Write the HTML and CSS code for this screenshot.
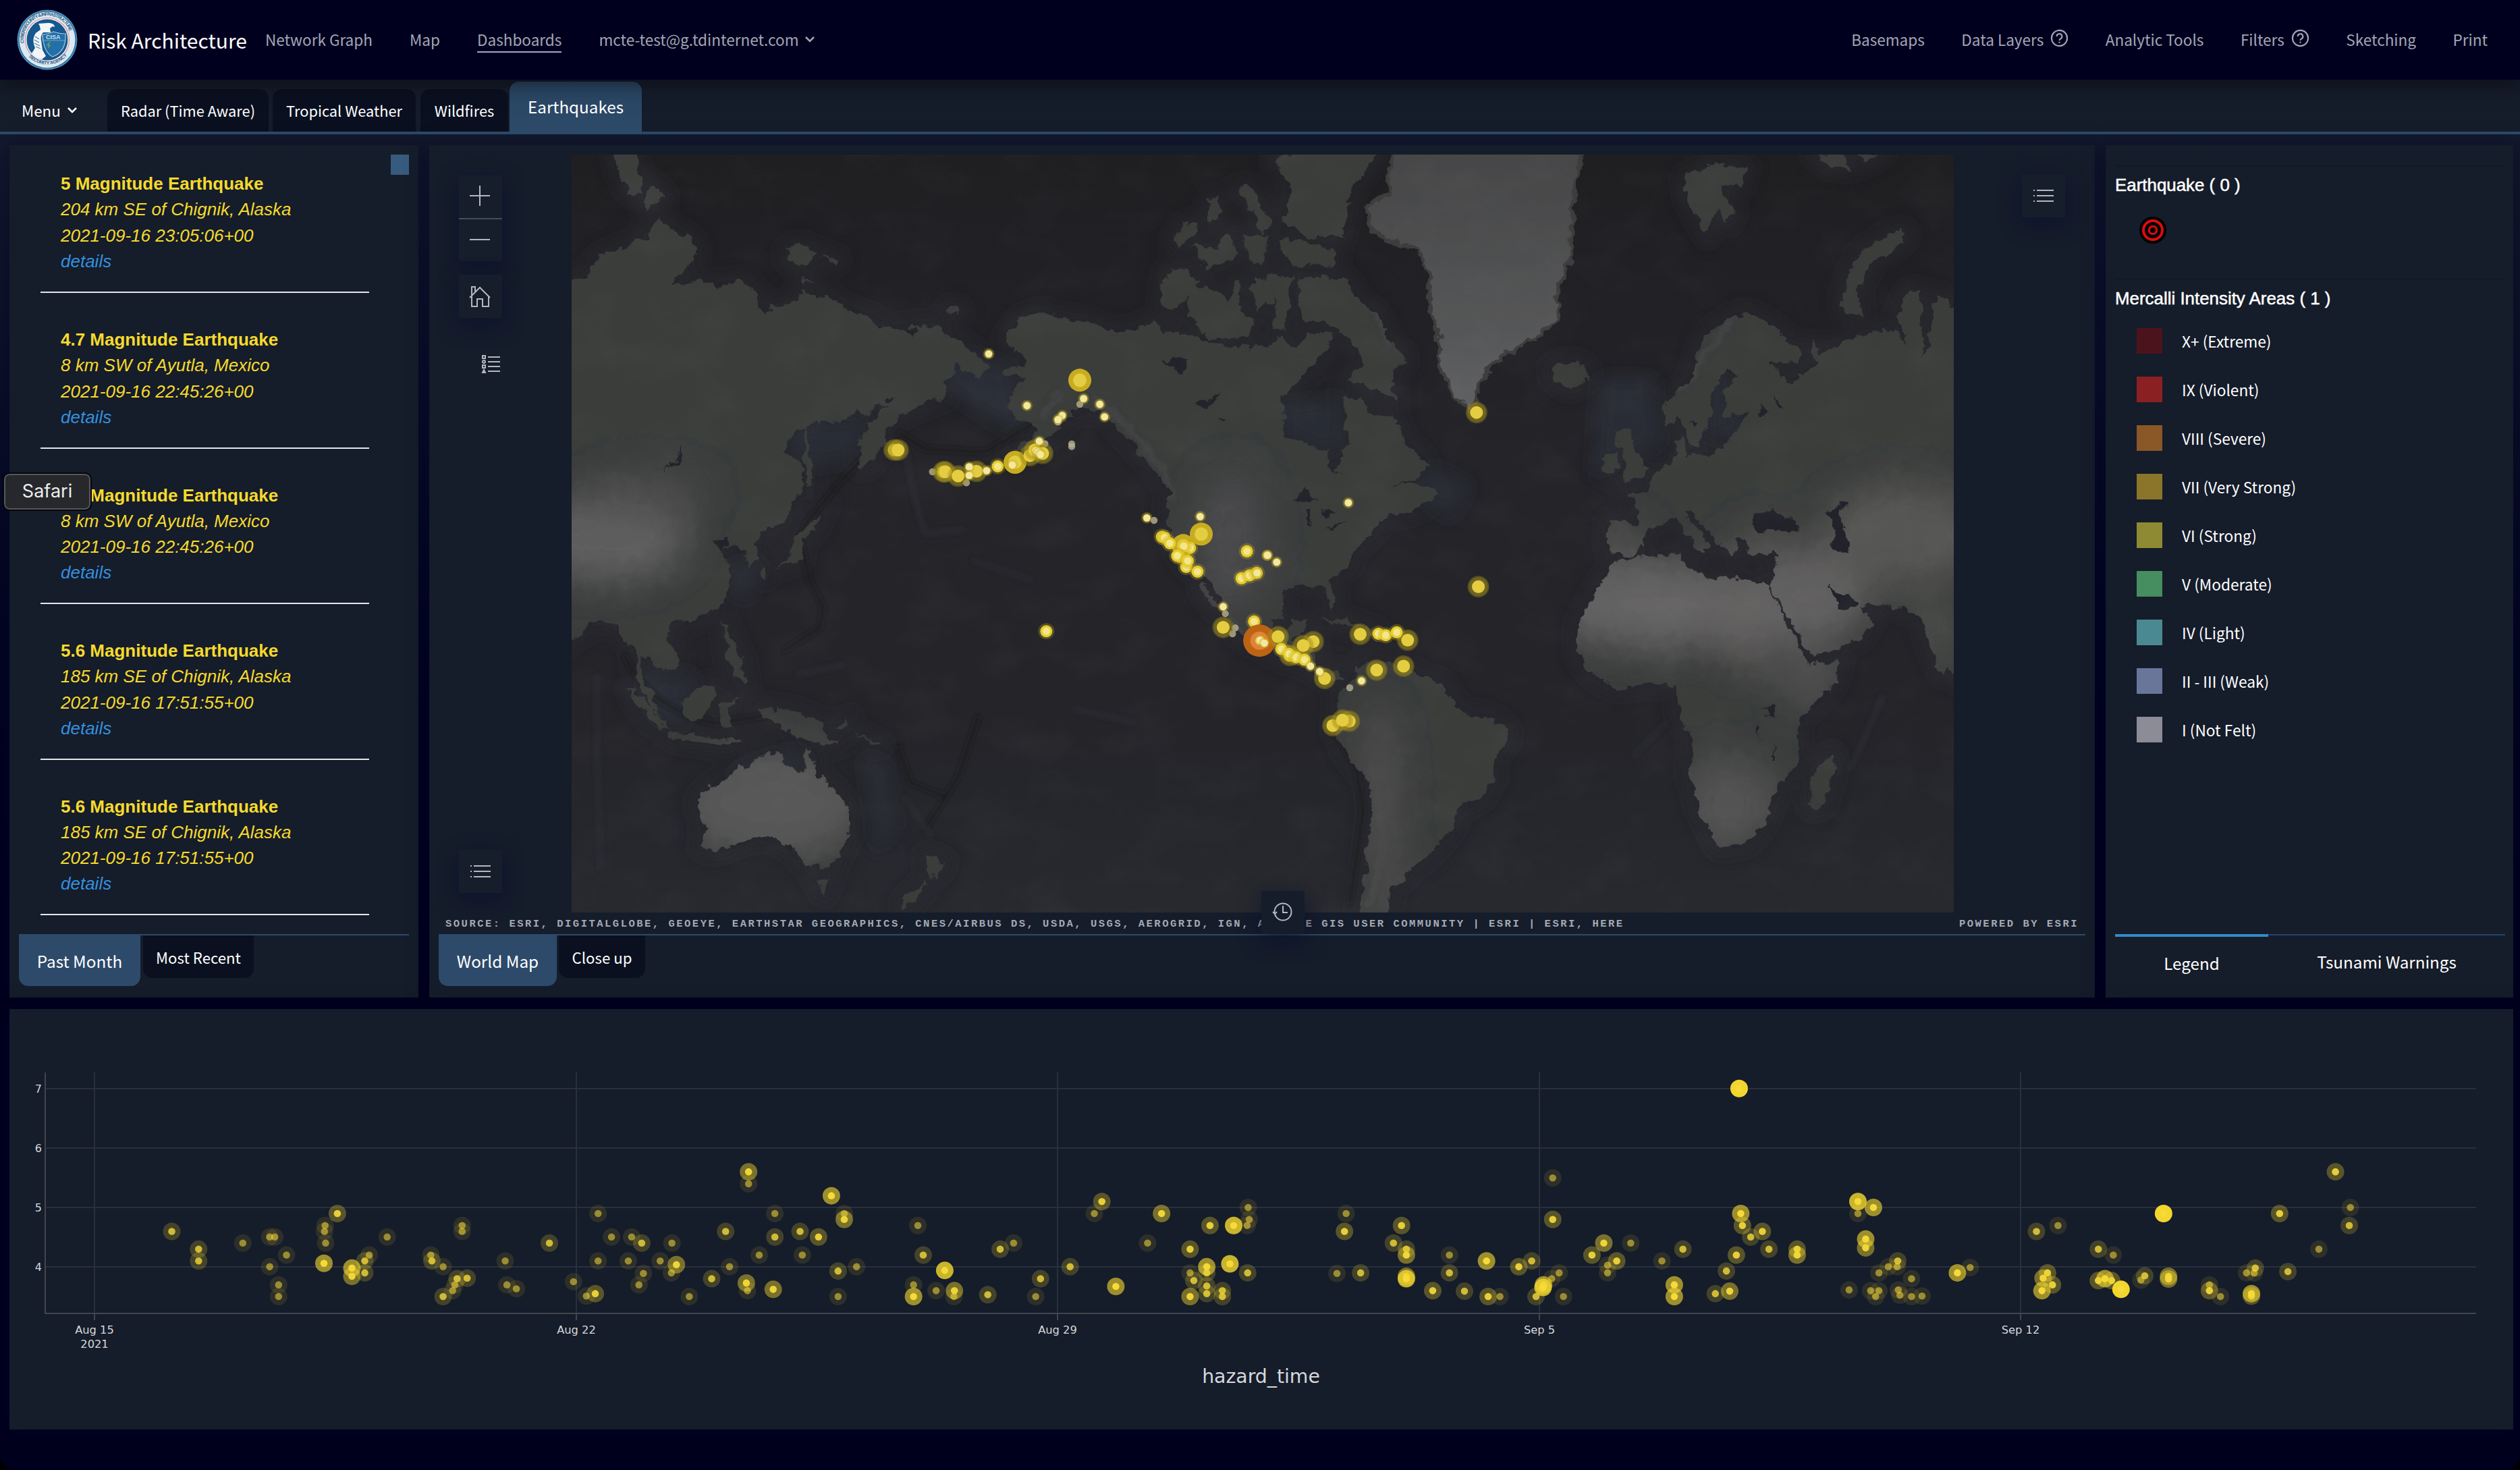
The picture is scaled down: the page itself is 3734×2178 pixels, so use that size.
FILE: index.html
```html
<!DOCTYPE html>
<html lang="en">
<head>
<meta charset="utf-8">
<title>Risk Architecture - Earthquakes</title>
<link rel="stylesheet" href="styles.css">
</head>
<body>
<div class="screen">
<header class="topbar">
  <svg class="logo" viewBox="0 0 90 90">
    <defs>
      <path id="ringTop" d="M10.5 50A35 35 0 1 1 79.5 50"/>
      <path id="ringBottom" d="M12 63A38.5 38.5 0 0 0 78 63"/>
    </defs>
    <circle cx="45" cy="45" r="44.5" fill="#4d8fb8"/>
    <circle cx="45" cy="45" r="42.5" fill="#1f5f8e"/>
    <circle cx="45" cy="45" r="41.5" fill="#dbe9f2"/>
    <circle cx="45" cy="45" r="32.5" fill="#f4f6f8" stroke="#d98a94" stroke-width="1.2"/>
    <circle cx="45" cy="45" r="30.5" fill="#15588f"/>
    <text class="logo-ring"><textPath href="#ringTop" textLength="104">CYBERSECURITY &amp; INFRASTRUCTURE</textPath></text>
    <text class="logo-ring"><textPath href="#ringBottom" startOffset="9" textLength="64">SECURITY AGENCY</textPath></text>
    <path d="M32 21l14-1c6 0 10 2 10 6l-3-1-4 3 1 6H39c-3 3-4 8-3 12l2 14 5 9-6 5c-6-1-12-5-15-9l5-8c-3-7-4-15 1-22l7-5-1-5z" fill="#f2f6f8"/>
    <path d="M27 40l6 4M26 45l7 4M26 50l8 4M28 55l7 3M38 38v10" stroke="#4f83a8" stroke-width="1.2" fill="none"/>
    <path d="M38 37q7 0 16-4 9 3 18 3c1 18-5 29-19 34-9-4-14-15-15-33z" fill="#2370a8" stroke="#a9c8dc" stroke-width="1.2"/>
    <path d="M39 46h32" stroke="#6fa2c4" stroke-width="1"/>
    <path d="M47 50v7M44 52l6 2M49 48l-3 5" stroke="#79a85e" stroke-width="1.3"/>
    <text x="43" y="43.5" class="logo-name">CISA</text>
  </svg>
  <span class="brand">Risk Architecture</span>
  <nav class="nav nav-left">
    <a>Network Graph</a><a>Map</a><a class="current">Dashboards</a>
    <a>mcte-test@g.tdinternet.com<svg class="chev" viewBox="0 0 16 10"><path d="M2 2l6 6 6-6"/></svg></a>
  </nav>
  <nav class="nav nav-right">
    <a>Basemaps</a>
    <a>Data Layers<svg class="help" viewBox="0 0 28 28"><circle cx="14" cy="14" r="12"/><path d="M10 11.5a4 4 0 1 1 5.6 3.6c-1.2.6-1.6 1.2-1.6 2.6M14 19.5v2"/></svg></a>
    <a>Analytic Tools</a>
    <a>Filters<svg class="help" viewBox="0 0 28 28"><circle cx="14" cy="14" r="12"/><path d="M10 11.5a4 4 0 1 1 5.6 3.6c-1.2.6-1.6 1.2-1.6 2.6M14 19.5v2"/></svg></a>
    <a>Sketching</a><a>Print</a>
  </nav>
</header>
<div class="tabbar">
  <div class="menu">Menu<svg class="chev" viewBox="0 0 16 10"><path d="M2 2l6 6 6-6"/></svg></div>
  <div class="tab t1">Radar (Time Aware)</div>
  <div class="tab t2">Tropical Weather</div>
  <div class="tab t3">Wildfires</div>
  <div class="tab active">Earthquakes</div>
</div>

<main class="board">
  <section class="panel feed">
    <div class="feed-scroll">
      <ul class="quakes">
        <li><b>5 Magnitude Earthquake</b><i>204 km SE of Chignik, Alaska</i><i>2021-09-16 23:05:06+00</i><a>details</a></li>
        <li><b>4.7 Magnitude Earthquake</b><i>8 km SW of Ayutla, Mexico</i><i>2021-09-16 22:45:26+00</i><a>details</a></li>
        <li><b>4.7 Magnitude Earthquake</b><i>8 km SW of Ayutla, Mexico</i><i>2021-09-16 22:45:26+00</i><a>details</a></li>
        <li><b>5.6 Magnitude Earthquake</b><i>185 km SE of Chignik, Alaska</i><i>2021-09-16 17:51:55+00</i><a>details</a></li>
        <li><b>5.6 Magnitude Earthquake</b><i>185 km SE of Chignik, Alaska</i><i>2021-09-16 17:51:55+00</i><a>details</a></li>
      </ul>
      <div class="thumb"></div>
    </div>
    <div class="bottom-tabs">
      <div class="btab on past">Past Month</div><div class="btab recent">Most Recent</div>
    </div>
  </section>

  <section class="panel map">
    <div class="map-view">
      <svg class="world" viewBox="847 229 2048 1123" preserveAspectRatio="none">
        <defs>
          <linearGradient id="sea" x1="0" y1="0" x2="0" y2="1"><stop offset="0" stop-color="#1f1f22"/><stop offset=".4" stop-color="#242429"/><stop offset=".75" stop-color="#242429"/><stop offset="1" stop-color="#27292e"/></linearGradient>
          <linearGradient id="ice" x1="0" y1="0" x2="0" y2="1"><stop offset="0" stop-color="#454546"/><stop offset=".7" stop-color="#565758"/><stop offset="1" stop-color="#606163"/></linearGradient>
          <filter id="soft" x="-50%" y="-50%" width="200%" height="200%"><feGaussianBlur stdDeviation="28"/></filter>
          <filter id="haze" filterUnits="userSpaceOnUse" x="800" y="180" width="2140" height="1220"><feGaussianBlur stdDeviation="12"/></filter>
          <filter id="trench" filterUnits="userSpaceOnUse" x="800" y="180" width="2140" height="1220"><feGaussianBlur stdDeviation="3.5"/></filter>
          <filter id="coast" filterUnits="userSpaceOnUse" x="800" y="180" width="2140" height="1220"><feTurbulence type="fractalNoise" baseFrequency=".06" numOctaves="4" seed="4" result="n"/><feDisplacementMap in="SourceGraphic" in2="n" scale="18" xChannelSelector="R" yChannelSelector="G"/></filter>
          <filter id="relief" filterUnits="userSpaceOnUse" x="847" y="229" width="2048" height="1123"><feTurbulence type="fractalNoise" baseFrequency=".012 .016" numOctaves="5" seed="11"/><feColorMatrix values="0 0 0 0 .6  0 0 0 0 .6  0 0 0 0 .64  1.6 0 0 0 -.72"/></filter>
          <path id="west" d="M-10 268L50 262 60 230 110 205 180 185 190 160 210 142 225 165 270 178 290 200 285 230 240 265 233 280 290 268 345 280 390 268 420 285 428 320 445 338 452 322 510 315 520 292 590 305 640 335 685 345 690 362 750 370 770 360 820 363 850 375 890 405 925 425 940 445 925 470 900 460 870 440 860 465 840 475 850 505 800 520 740 545 715 570 705 610 670 650 655 650 650 600 680 560 718 525 690 520 670 545 650 530 620 555 540 560 510 580 485 620 525 640 530 680 510 720 490 755 440 780 425 800 425 835 405 850 400 825 370 800 345 820 365 850 362 900 340 935 300 955 262 965 235 965 220 985 250 1030 250 1055 215 1068 180 1040 160 1030 170 1080 205 1140 215 1160 190 1140 160 1090 150 1020 130 1005 110 965 60 967 -10 1015Z
            M533 560L545 640 550 690 538 690 530 620ZM540 765L570 745 555 775 528 800 520 840 450 855 440 875 430 865 490 840 512 790Z
            M130 1095L170 1120 210 1160 225 1185 190 1170ZM225 1188L330 1202 400 1208 340 1217 230 1200ZM250 1130L300 1100 330 1090 325 1130 300 1165 265 1160ZM340 1130L385 1118 355 1145 372 1175 345 1180ZM350 960L365 990 390 1040 400 1090 375 1080 358 1030ZM430 1140L500 1145 560 1165 600 1215 560 1210 520 1200 450 1165ZM600 1180L625 1165 620 1180ZM640 1185L700 1215 690 1220Z
            M290 1330L320 1300 360 1285 370 1268 420 1250 430 1235 480 1232 490 1260 525 1273 540 1228 565 1280 600 1310 632 1350 630 1400 600 1455 570 1465 530 1460 510 1430 490 1425 465 1405 430 1400 380 1415 330 1432 300 1425 310 1390ZM555 1490L590 1490 575 1520ZM805 1440L845 1455 825 1480 810 1490ZM800 1492L790 1520 755 1550 748 1540Z
            M105 5L150 5 155 40 172 65 165 95 140 90 120 60ZM180 85L195 75 220 100 175 125ZM490 205L520 195 558 210 550 232 495 232ZM565 220L605 225 600 235ZM525 262L545 270 530 280ZM848 330L870 322 880 332 852 340Z
            M980 385L1010 350 1060 332 1100 345 1160 352 1230 380 1290 362 1310 348 1330 370 1400 380 1440 400 1500 405 1600 408 1600 960 1550 960 1560 1000 1580 1030 1520 1000 1495 985 1470 930 1440 890 1420 870 1400 860 1370 830 1350 790 1340 740 1350 700 1320 665 1280 620 1240 580 1210 545 1170 530 1130 535 1110 555 1080 585 1030 610 980 625 1030 595 1055 572 1010 550 980 530 1000 490 1025 470 970 460 975 445 1025 440 1020 415 990 405ZM1415 880L1470 950 1452 940 1420 905Z
            M1340 250L1370 245 1415 270 1390 300 1350 332 1328 310ZM1385 310L1400 280 1450 290 1480 310 1490 265 1505 270 1500 320 1535 360 1520 385 1430 390 1395 350ZM1350 190L1380 155 1410 150 1400 180 1365 200ZM1395 195L1450 205 1470 170 1500 210 1460 240 1430 243ZM1500 80L1520 75 1550 115 1530 130ZM1435 105L1460 100 1455 145 1430 148ZM1505 180L1565 175 1560 225 1525 225ZM1525 280L1580 260 1580 320 1540 310Z"/>
          <path id="east" d="M-25 408L40 400 60 380 90 410 120 380 165 370 160 410 120 450 90 480 60 500 50 545 65 585 120 610 160 615 160 650 180 665 185 630 205 600 200 570 190 510 240 510 260 545 300 545 330 600 375 640 370 660 300 690 340 680 400 700 390 715 340 740 300 745 270 765 250 790 215 820 205 850 165 880 175 920 165 935 150 895 100 890 40 900 30 950 40 985 70 985 80 960 115 960 105 990 80 1000 80 1015 130 1010 125 1045 160 1070 185 1065 190 1080 165 1085 120 1060 70 1030 -25 1000Z
            M95 265L130 262 200 268 225 310 270 340 290 385 330 430 300 455 305 510 260 490 200 470 240 440 220 400 170 360 100 345ZM40 20L100 5 275 5 210 90 190 180 110 180 60 140 80 90ZM0 100L40 150 20 170 0 160ZM45 190L100 185 180 210 170 240 80 240ZM0 180L25 185 20 230 0 230ZM25 260L85 260 75 300 65 370 40 365 45 310ZM0 260L15 270 20 320 0 330Z
            M650 445L690 435 725 445 730 470 690 490 655 470ZM790 575L820 570 830 610 860 650 855 675 810 680 815 640 800 610ZM765 630L795 618 795 655 765 665Z
            M895 515L950 480 980 390 1030 350 1080 335 1130 360 1195 410 1190 435 1130 435 1170 480 1225 440 1220 390 1240 420 1300 390 1350 375 1400 370 1430 400 1410 340 1430 290 1455 290 1465 400 1460 430 1475 400 1490 300 1560 330 1560 1100 1520 1060 1505 1070 1480 1020 1460 960 1420 935 1330 930 1350 965 1325 1000 1225 1035 1210 1020 1125 890 1140 850 1145 825 1085 825 1075 795 1055 800 1050 830 1010 800 995 780 955 740 940 745 985 790 1000 810 975 825 950 790 925 755 880 765 850 800 830 828 790 825 772 810 775 760 840 765 835 720 815 705 860 695 880 660 925 630 920 595 935 585 945 625 1010 620 1040 590 1080 540 1030 545 1025 500 1060 460 1035 450 1000 500 1000 550 970 610 950 600 930 545 900 570Z
            M800 835L930 825 940 850 1015 885 1025 870 1120 885 1160 960 1215 1050 1280 1045 1270 1090 1190 1165 1190 1250 1145 1300 1120 1370 1080 1415 1015 1425 975 1350 950 1270 960 1210 930 1160 925 1095 870 1090 790 1100 735 1070 705 1030 710 960 740 910 770 870ZM1265 1235L1270 1260 1245 1340 1220 1345 1215 1300 1225 1265Z
            M940 60L1010 30 1078 40 1065 75 1020 75 1050 130 1040 150 1010 120 990 175 950 110ZM1285 320L1300 260 1330 210 1380 180 1415 165 1430 175 1400 205 1350 230 1320 290 1325 340 1295 335ZM1230 15L1290 8 1300 40 1260 35ZM1320 8L1370 10 1340 30Z
            M180 1120L240 1045 290 1045 360 1075 410 1090 450 1150 520 1160 555 1185 550 1215 520 1245 520 1290 495 1325 445 1345 430 1390 390 1430 370 1450 340 1465 325 1490 300 1500 290 1570 225 1570 240 1480 255 1350 250 1290 210 1250 175 1190ZM140 958L200 960 235 978 190 970ZM245 978L280 985 250 990Z"/>
          <path id="greenland" d="M300 -5L718 -5 700 80 695 150 690 230 660 290 665 345 610 390 560 410 500 460 490 500 470 535 435 500 400 440 405 400 385 330 380 260 355 205 300 190 250 165 245 120 290 90Z"/>
          <clipPath id="land"><use href="#west" transform="translate(840 220) scale(.6633 .727)"/><use href="#east" transform="translate(1860 220) scale(.676 .727)"/></clipPath>
        </defs>
        <rect x="847" y="229" width="2048" height="1123" fill="url(#sea)"/>
        <g filter="url(#haze)" fill="none" stroke="#292a32" stroke-width="26" opacity=".7">
          <use href="#west" transform="translate(840 220) scale(.6633 .727)"/><use href="#east" transform="translate(1860 220) scale(.676 .727)"/>
        </g>
        <g filter="url(#haze)" fill="#2c2d37" opacity=".85">
          <path d="M1390 535L1440 525 1500 545 1510 600 1530 620 1500 640 1450 610 1400 575ZM1170 640L1210 625 1290 620 1260 680 1210 690 1180 680ZM1895 600L1990 590 1985 660 1960 670 1900 640ZM2370 560L2450 560 2460 660 2420 670 2360 700ZM2530 570L2560 560 2560 600 2600 640 2530 650ZM2120 690L2180 720 2150 770 2100 730Z"/>
          <path d="M950 990L1030 1000 1010 1080 970 1060ZM1060 1150L1180 1110 1200 1130 1180 1150 1120 1140ZM1280 1120L1310 1130 1330 1220 1300 1260ZM1080 840L1130 830 1110 890 1085 880Z"/>
        </g>
        <path filter="url(#trench)" fill="none" stroke="#1b1b1f" stroke-width="4" d="M1305 650L1240 720 1195 775 1185 800 1200 860 1220 900 1215 930 1160 965M1330 640L1370 665 1460 670 1560 610 1620 585 1650 600 1720 690 1735 715M925 970Q960 1050 1060 1072L1160 1056M1330 1105L1350 1160 1400 1180M1450 1060L1420 1150 1370 1230M1975 1080L2010 1140 2020 1200 2000 1340"/>
        <path filter="url(#trench)" fill="none" stroke="#2a2b30" stroke-width="6" d="M1200 690L1200 740M1340 660L1355 735 1370 790 1430 785M1440 830L1530 860M1250 985L1180 1000M885 1000L885 1130 890 1290M1590 1050L1680 1070M1340 1180L1380 1240M2790 1030L2760 1100 2740 1140M2420 1120L2470 1070"/>
        <g filter="url(#coast)">
          <g fill="#3a3c3b"><use href="#west" transform="translate(840 220) scale(.6633 .727)"/><use href="#east" transform="translate(1860 220) scale(.676 .727)"/></g>
          <g clip-path="url(#land)"><g filter="url(#soft)">
            <ellipse cx="890" cy="800" rx="130" ry="62" fill="#5f5f5f"/><ellipse cx="960" cy="730" rx="90" ry="30" fill="#4b4b4b"/>
            <ellipse cx="1145" cy="1190" rx="140" ry="85" fill="#585858"/><ellipse cx="1825" cy="800" rx="50" ry="110" fill="#4a4a4b"/>
            <ellipse cx="2460" cy="895" rx="180" ry="66" fill="#656463"/><ellipse cx="2590" cy="910" rx="50" ry="80" fill="#636161"/><ellipse cx="2690" cy="880" rx="80" ry="70" fill="#626160"/>
            <ellipse cx="2820" cy="790" rx="120" ry="75" fill="#565655"/><ellipse cx="2860" cy="930" rx="40" ry="60" fill="#474847"/><ellipse cx="2560" cy="1190" rx="75" ry="70" fill="#525252"/><ellipse cx="2680" cy="1000" rx="40" ry="50" fill="#525252"/>
            <ellipse cx="2045" cy="1180" rx="24" ry="140" fill="#525152"/><ellipse cx="2060" cy="1320" rx="40" ry="60" fill="#4a4a4a"/><ellipse cx="2400" cy="800" rx="36" ry="30" fill="#4e4e4e"/><ellipse cx="2610" cy="805" rx="40" ry="24" fill="#525251"/>
          </g>
          <g filter="url(#trench)" fill="none" stroke="#505051" stroke-width="5" opacity=".8"><path d="M1545 620L1570 580M1620 590L1670 630 1720 690 1740 740M1800 880L1850 960M2030 1130L2045 1180 2050 1260 2030 1340M2490 580L2530 520 2570 470M1990 350L2020 420 2060 510"/></g></g>
          <use href="#greenland" transform="translate(1860 220) scale(.676 .727)" fill="url(#ice)" stroke="#3c3d3d" stroke-width="9"/>
          <g fill="#242429" transform="translate(1860 220) scale(.676 .727)">
            <path d="M1090 745L1130 730 1190 765 1195 782 1100 780 1085 765ZM1250 735L1295 725 1280 750 1300 800 1300 828 1265 815 1270 780ZM1255 890L1285 908 1322 925 1310 940 1285 935ZM80 720L110 695 135 715ZM112 738L125 735 120 775ZM145 735L175 740 160 758ZM150 775L205 757 180 770ZM1118 1138h18v18h-18ZM1100 1165L1110 1205 1098 1185ZM1136 1212L1142 1245 1136 1245ZM1105 520L1125 540 1108 545ZM1142 505L1155 530 1145 530ZM955 560L968 555 962 568Z"/>
          </g>
          <g fill="#242429" transform="translate(840 220) scale(.6633 .727)">
            <path d="M255 612L255 635 215 665 245 635ZM1335 435L1390 425 1380 460 1350 455ZM1405 525L1440 505 1465 500 1430 525ZM715 510L728 505 722 520ZM755 365L780 365 775 385ZM485 1420L498 1420 495 1438ZM330 800L360 798 345 820ZM1455 555L1475 556 1460 562Z"/>
          </g>
        </g>
        <rect x="847" y="229" width="2048" height="1123" filter="url(#relief)" opacity=".045"/>
        <g id="markers"></g>
      </svg>
      <div class="attribution"><span>SOURCE: ESRI, DIGITALGLOBE, GEOEYE, EARTHSTAR GEOGRAPHICS, CNES/AIRBUS DS, USDA, USGS, AEROGRID, IGN, AND THE GIS USER COMMUNITY | ESRI | ESRI, HERE</span><span>POWERED BY ESRI</span></div>
      <div class="ctl zoom"><svg viewBox="0 0 64 127"><path d="M16 30H46M31 15V45M16 95H46"/><path class="rule" d="M0 64H64"/></svg></div>
      <div class="ctl home"><svg viewBox="0 0 64 64"><path d="M16 34L31 19 46 34M19 32V47H27V36H35V47H44V32M19 30V18H24V25"/></svg></div>
      <div class="legend-btn"><svg viewBox="0 0 30 30"><path d="M10 5H28M10 12H28M10 19H28M10 26H28M2 3h4v4h-4zM2 17h4v4h-4zM4 24l2 4h-4z"/><circle cx="4" cy="12" r="2"/></svg></div>
      <div class="ctl list-left"><svg viewBox="0 0 64 64"><path d="M22 24H47M22 32H47M22 40H47M17 24h2M17 32h2M17 40h2"/></svg></div>
      <div class="ctl list-right"><svg viewBox="0 0 64 64"><path d="M22 24H47M22 32H47M22 40H47M17 24h2M17 32h2M17 40h2"/></svg></div>
      <div class="ctl clock"><svg viewBox="0 0 64 64"><circle cx="32" cy="31" r="12.5"/><path d="M32 22V32H39M17 31l3 3 3-3"/></svg></div>
    </div>
    <div class="bottom-tabs">
      <div class="btab on world-tab">World Map</div><div class="btab close-tab">Close up</div>
    </div>
  </section>

  <section class="panel legend">
    <div class="legend-body">
      <h3>Earthquake ( 0 )</h3>
      <svg class="target" viewBox="0 0 42 42"><circle cx="21" cy="21" r="20" fill="#000"/><circle cx="21" cy="21" r="14" fill="none" stroke="#dc0c0e" stroke-width="4"/><circle cx="21" cy="21" r="5.6" fill="none" stroke="#d00c0e" stroke-width="3.4"/></svg>
      <h3 class="second">Mercalli Intensity Areas ( 1 )</h3>
      <ul class="classes">
        <li><s class="c10"></s>X+ (Extreme)</li><li><s class="c9"></s>IX (Violent)</li><li><s class="c8"></s>VIII (Severe)</li>
        <li><s class="c7"></s>VII (Very Strong)</li><li><s class="c6"></s>VI (Strong)</li><li><s class="c5"></s>V (Moderate)</li>
        <li><s class="c4"></s>IV (Light)</li><li><s class="c2"></s>II - III (Weak)</li><li><s class="c1"></s>I (Not Felt)</li>
      </ul>
    </div>
    <div class="legend-tabs"><div class="on">Legend</div><div>Tsunami Warnings</div></div>
  </section>

  <section class="panel chart">
    <svg class="plot" viewBox="14 1495 3710 623">
      <g class="grid"><path d="M67 1613H3669M67 1701H3669M67 1789H3669M67 1877H3669M140 1589V1945M854 1589V1945M1567 1589V1945M2281 1589V1945M2994 1589V1945"/></g>
      <g class="axis"><path d="M67 1589V1946H3669M140 1946V1956M854 1946V1956M1567 1946V1956M2281 1946V1956M2994 1946V1956"/></g>
      <g id="points"></g>
      <g class="ylab"><text x="62" y="1619">7</text><text x="62" y="1707">6</text><text x="62" y="1795">5</text><text x="62" y="1883">4</text></g>
      <g class="xlab"><text x="140" y="1976">Aug 15</text><text x="140" y="1997">2021</text><text x="854" y="1976">Aug 22</text><text x="1567" y="1976">Aug 29</text><text x="2281" y="1976">Sep 5</text><text x="2994" y="1976">Sep 12</text></g>
      <text class="xtitle" x="1868.5" y="2049">hazard_time</text>
    </svg>
  </section>
</main>
<div class="tooltip">Safari</div>
</div>
<script src="plot.js"></script>
</body>
</html>
```
FILE: styles.css
```css
*{box-sizing:border-box}
body{margin:0;background:#000;font-family:"Noto Sans CJK SC","Noto Sans",sans-serif;color:#fff}
.screen{position:relative;width:3734px;height:2178px;overflow:hidden;border-radius:0 0 22px 22px;background:linear-gradient(#13192c 199px,#0c1128 500px,#020420 950px,#00001e 1400px)}
ul{list-style:none;margin:0;padding:0}
.topbar{position:relative;z-index:2;height:118px;display:flex;align-items:center;background:#00001e;padding:0 48px 0 25px;box-shadow:0 4px 30px rgba(0,0,0,.55)}
.logo{width:90px;height:90px;flex:none}
.logo-ring{font:bold 7px "Liberation Sans",sans-serif;fill:#2a5f88}
.logo-name{font:bold 9px "Liberation Sans",sans-serif;fill:#cfe0ec}
.brand{width:263px;margin-left:15px;font-size:30px;white-space:nowrap;padding-bottom:1px}
.nav{display:flex;gap:55px;font-size:22.55px;color:#a3a5b6;white-space:nowrap;padding-bottom:2px}
.nav a{display:flex;align-items:center;height:34px}
.nav-right{margin-left:auto}
.current{position:relative}
.current::after{content:"";position:absolute;left:0;right:0;bottom:-3px;height:2px;background:#a3a5c4}
.chev{width:16px;height:10px;margin-left:8px;fill:none;stroke:currentColor;stroke-width:2.6}
.help{width:27px;height:27px;margin:-4px 0 0 10px;fill:none;stroke:currentColor;stroke-width:2.2}
.nav-right{gap:54.5px}
.tabbar{height:81px;display:flex;align-items:flex-end;background:#151c2a;border-bottom:4px solid #2d4a6a;font-size:21.8px;white-space:nowrap}
.menu{width:159px;height:63px;padding:0 0 1px 32px;display:flex;align-items:center;font-size:22.4px}
.menu .chev{margin-left:9px}
.tab{height:63px;padding-bottom:1px;border-radius:14px 14px 0 0;background:#0a1020;display:flex;align-items:center;justify-content:center}
.t1{width:239px;margin-right:6px}.t2{width:212px;margin-right:7px}.t3{width:130px;margin-right:2px}
.tab.active{position:relative;z-index:1;width:196px;height:78px;margin-bottom:-4px;padding-bottom:6px;background:linear-gradient(#294562,#2d4a6a);font-size:24.2px}
.board{display:grid;grid-template-columns:606px 2468px 604px;grid-template-rows:1263px 623px;gap:17px 16px;padding:16px 10px 0 14px}
.panel{background:#151c2a;display:flex;flex-direction:column;box-shadow:0 4px 26px rgba(4,6,36,.55)}
.feed{padding:14px 14px 0}
.feed-scroll{height:1155px;display:flex;justify-content:space-between;overflow:hidden}
.thumb{width:27px;height:30px;background:#365b7f}
.quakes{width:487px;margin-left:32px;padding-top:24px;font-family:"Liberation Sans",Arial,sans-serif;font-size:26px;line-height:38.3px}
.quakes li{display:flex;flex-direction:column;height:181px;padding-left:30px;border-bottom:2px solid #e4e6ea;margin-bottom:27px;white-space:nowrap}
.quakes li+li{height:203.5px;padding-top:23px}
.quakes b,.quakes i{color:#f5da2c}
.quakes a{color:#3490df;font-style:italic}
.bottom-tabs{display:flex;align-items:flex-start;border-top:2px solid #2c4a6b;font-size:22.2px;white-space:nowrap}
.btab{height:63px;background:#0a1020;border-radius:0 0 14px 14px;display:flex;align-items:center;justify-content:center}
.btab.on{height:75px;background:#2d4a6a;font-size:24.3px;padding-bottom:1px}
.past{width:180px}.recent{width:164px;margin-left:4px}
.world-tab{width:175px}.close-tab{width:128px;margin-left:3px}
.map{padding:14px 14px 0}
.map-view{position:relative;height:1155px}
.world{display:block;width:2048px;height:1123px;margin-left:197px}
.attribution{height:32px;display:flex;justify-content:space-between;align-items:center;padding:3px 10px 0 10px;font:bold 15.5px/1 "Liberation Mono",monospace;letter-spacing:2.5px;color:#a5a9b2;white-space:pre}
.ctl{position:absolute;background:#171e2b;box-shadow:0 10px 30px rgba(12,16,48,.7)}
.ctl svg,.legend-btn svg{display:block;width:100%;height:100%;fill:none;stroke:#b4b8be;stroke-width:2}
.ctl .rule{stroke:#464c5a}
.zoom{left:30px;top:31px;width:64px;height:127px}
.home{left:30px;top:178px;width:64px;height:64px}
.legend-btn{position:absolute;left:63px;top:295px;width:30px;height:30px}
.list-left{left:30px;top:1030px;width:64px;height:64px}
.list-right{left:2346px;top:29px;width:64px;height:64px}
.clock{left:1219px;top:1091px;width:64px;height:64px;background:#151d2b}
.legend{padding:30px 12px 0 14px}
.legend-body{height:1139px}
.legend h3{margin:0;font:25.9px/54px "Liberation Sans",Arial,sans-serif;-webkit-text-stroke:.5px #fff;border-top:2px solid #111827}
.target{display:block;width:42px;height:42px;margin:19px 0 0 35px}
.legend h3.second{margin-top:51px}
.classes{padding-left:32px;font-size:22.7px}
.classes li{height:72px;display:flex;align-items:center}
.classes s{width:38px;height:38px;margin-right:29px}
.c10{background:#4b141c}.c9{background:#8b2022}.c8{background:#8a5726}.c7{background:#8a752b}.c6{background:#8e8a33}.c5{background:#468d60}.c4{background:#4a8992}.c2{background:#69769a}.c1{background:#8b8c95}
.legend-tabs{display:flex;border-top:2px solid #22456a;font-size:24.2px}
.legend-tabs div{width:351px;height:76px;display:flex;align-items:center;justify-content:center;white-space:nowrap}
.legend-tabs .on{width:227px;margin-top:-2px;border-top:4px solid #338ac8;height:80px}
.chart{grid-column:1/4}
.plot{display:block;width:3710px;height:623px;font-family:"DejaVu Sans",Verdana,sans-serif;fill:#d6d8dc}
.grid path{stroke:#292f3c;stroke-width:2;fill:none}
.axis path{stroke:#41454d;stroke-width:2;fill:none}
.ylab{font-size:16px;text-anchor:end}
.xlab{font-size:16.3px;text-anchor:middle}
.xtitle{font-size:28.3px;text-anchor:middle}
.tooltip{position:absolute;left:6px;top:702px;width:128px;height:53px;border:2px solid #55575a;outline:2px solid #050608;border-radius:8px;background:#26282b;font:27px/48px Inter,sans-serif;text-align:center;color:#eee}
```
FILE: plot.js
```js
const NS = 'http://www.w3.org/2000/svg';
function circle(parent, x, y, r, fill, opacity) {
  const c = document.createElementNS(NS, 'circle');
  c.setAttribute('cx', x); c.setAttribute('cy', y); c.setAttribute('r', r);
  c.setAttribute('fill', fill); c.setAttribute('fill-opacity', opacity);
  parent.appendChild(c);
}

// Scatter points: [x, y, number of coincident events], one block per stretch of the time axis.
const blocks = [
  { x: 0, kx: .829, pts: [[307,671,2],[355,738,2],[355,782,2],[434,715,1],[482,692,1],[491,692,1],[512,760,1],[482,804,1],[498,872,1],[498,916,1],[603,604,3],[581,649,1],[580,671,1],[582,715,1],[579,791,5],[629,809,5],[629,840,4],[652,782,2],[660,760,1],[652,827,2],[692,692,1],[770,760,1],[772,782,2],[826,649,1],[826,671,1],[792,804,1],[835,847,2],[817,849,2],[813,872,1],[809,894,1],[792,916,2],[903,782,1],[906,872,1],[923,887,1],[982,715,2],[1025,860,1],[1069,604,1],[1069,782,1],[1048,914,1],[1064,905,3],[1093,692,1],[1129,692,1],[1147,715,2],[1123,782,1],[1150,829,1],[1142,872,1],[1201,715,1],[1180,782,1],[1200,827,1],[1209,796,4],[1232,916,1],[1297,671,2],[1304,804,1],[1272,849,2],[1338,492,1],[1338,447,4],[1357,760,1],[1334,865,4],[1336,894,1],[1382,889,4],[1385,604,1],[1385,692,2],[1430,671,2],[1434,760,1],[1463,692,3],[1486,537,5],[1509,604,1],[1509,626,4],[1498,820,2],[1498,916,1],[1531,804,1]] },
  { x: 1250, kx: .7972, pts: [[138,649,1],[148,760,2],[130,872,1],[130,916,5],[188,818,6],[172,894,1],[206,894,4],[205,916,1],[268,909,2],[291,738,2],[316,715,1],[366,849,2],[357,916,1],[421,804,2],[466,604,1],[480,559,3],[506,878,5],[591,604,4],[565,715,1],[644,738,3],[681,649,3],[752,581,1],[754,626,1],[750,649,1],[725,649,6],[675,804,5],[718,793,6],[644,827,1],[675,827,2],[651,856,2],[751,827,2],[675,876,2],[675,905,2],[644,916,4],[704,894,2],[704,916,2],[934,604,1],[931,671,3],[917,829,1],[961,827,2],[1037,649,3],[1022,715,2],[1046,738,2],[1046,760,4],[1046,840,4],[1046,849,6],[1126,760,1],[1126,827,2],[1095,894,3],[1154,896,2],[1195,782,5],[1198,916,3],[1220,916,1],[1255,804,3],[1279,782,2],[1318,470,1],[1318,626,3],[1316,849,1],[1330,827,1],[1287,916,2],[1301,872,5],[1300,882,6],[1338,916,1],[1391,760,3],[1413,715,4],[1437,782,3],[1420,798,1],[1420,827,1],[1463,715,1],[1521,782,1],[1560,738,2],[1544,872,5],[1544,916,5]] },
  { x: 2450, kx: .8189, pts: [[155,134,7],[161,649,3],[158,604,5],[176,692,2],[197,671,3],[209,738,2],[150,760,3],[260,738,3],[260,760,4],[132,820,2],[112,905,2],[138,896,4],[370,604,1],[370,559,6],[398,581,5],[384,700,5],[384,733,4],[442,782,2],[441,804,1],[425,804,1],[408,827,1],[467,849,1],[354,891,1],[393,894,1],[408,894,1],[443,891,1],[402,916,1],[446,911,1],[467,916,1],[486,914,1],[550,827,5],[573,807,1],[693,671,2],[732,649,1],[713,827,3],[705,847,4],[722,872,3],[703,894,5],[805,738,2],[832,760,1],[805,856,3],[829,856,3],[817,849,5],[846,889,7],[882,854,1],[889,838,2],[923,604,7],[932,840,4],[932,850,4],[1006,872,1],[1006,894,3],[1026,916,1],[1073,827,1],[1087,827,1],[1089,809,2],[1082,914,3],[1082,905,5],[1133,604,3],[1148,822,2],[1204,738,1],[1234,447,3],[1261,581,1],[1259,649,2]] }
];
const halo = [0, .11, .21, .31, .45, .62, .82, 1];
const core = [0, .55, .8, .92, .95, 1, 1, 1];
const points = document.getElementById('points');
for (const b of blocks) for (const [px, py, n] of b.pts) {
  const x = b.x + px * b.kx, y = 1560 + py * .3941;
  circle(points, x, y, 13, '#f2d62e', halo[n]);
  circle(points, x, y, 5.3, '#f5da38', core[n]);
}

// Map markers: style key followed by x, y pairs; each style is a stack of [radius, fill, opacity].
const styles = {
  s: [[8.5, '#c2aa1e', .3], [7, '#d9c22a', .35], [5.4, '#f3e8a0', 1]],
  g: [[5.2, '#b8b294', .8]],
  y: [[12, '#c2aa1e', .3], [9, '#e6cd2b', 1], [5.6, '#f3e68c', 1]],
  m: [[16, '#a8941c', .38], [14, '#a8941c', .3], [9.5, '#e4cd40', 1]],
  l: [[17, '#c8ac20', 1], [10, '#e3cd43', 1]],
  o: [[24, '#bd6314', 1], [13.5, '#e08339', 1], [6, '#f5dd9a', 1]]
};
const markers = document.getElementById('markers');
function draw(x0, y0, kx, ky, list) {
  for (const [key, ...xy] of list)
    for (let i = 0; i < xy.length; i += 2)
      for (const [r, fill, op] of styles[key]) circle(markers, x0 + xy[i] * kx, y0 + xy[i + 1] * ky, r, fill, op);
}
draw(1300, 500, 1 / 3, 1 / 3, [
  ['g', 900,297, 745,472, 864,473, 864,485, 245,597, 396,646, 803,376, 1230,813],
  ['l', 900,190], ['s', 495,73, 665,303, 917,272, 989,297, 1010,353, 822,347, 803,365],
  ['m', 75,500, 92,500, 293,597, 302,597, 359,616, 441,595], ['y', 535,573], ['l', 612,555], ['s', 600,567],
  ['m', 678,525, 700,500, 735,515], ['s', 720,461, 705,502, 715,510, 725,520, 408,575, 408,613, 486,592],
  ['s', 1198,802, 1435,796], ['l', 1440,874, 1360,925],
  ['y', 1265,886, 1277,890, 1300,915, 1390,935, 1362,928, 1345,975, 1333,970, 1373,1020, 1380,993, 1423,1041, 751,1306]
]);
draw(840, 220, .6633, .727, [
  ['y', 1519,821, 1507,876, 1525,870, 1541,865, 1535,964], ['g', 1471,948, 1493,977, 1487,989], ['s', 1564,829, 1466,934], ['m', 1466,976], ['o', 1547,1003]
]);
draw(1860, 220, .676, .727, [
  ['m', 485,538, 489,893, 50,995, 127,1005, 105,1013, 76,1033, 152,1080, 170,1176, 206,1167, 191,1165, 266,1063, 325,1055, 334,1002, 230,990],
  ['y', 57,1020, 74,1030, 90,1037, 108,1042, 270,989, 286,992, 310,986],
  ['s', 204,722, 27,829, 47,843, 4,865, 11,1002, 20,1008, 121,1055, 141,1066, 233,1085], ['g', 207,1099]
]);
```
